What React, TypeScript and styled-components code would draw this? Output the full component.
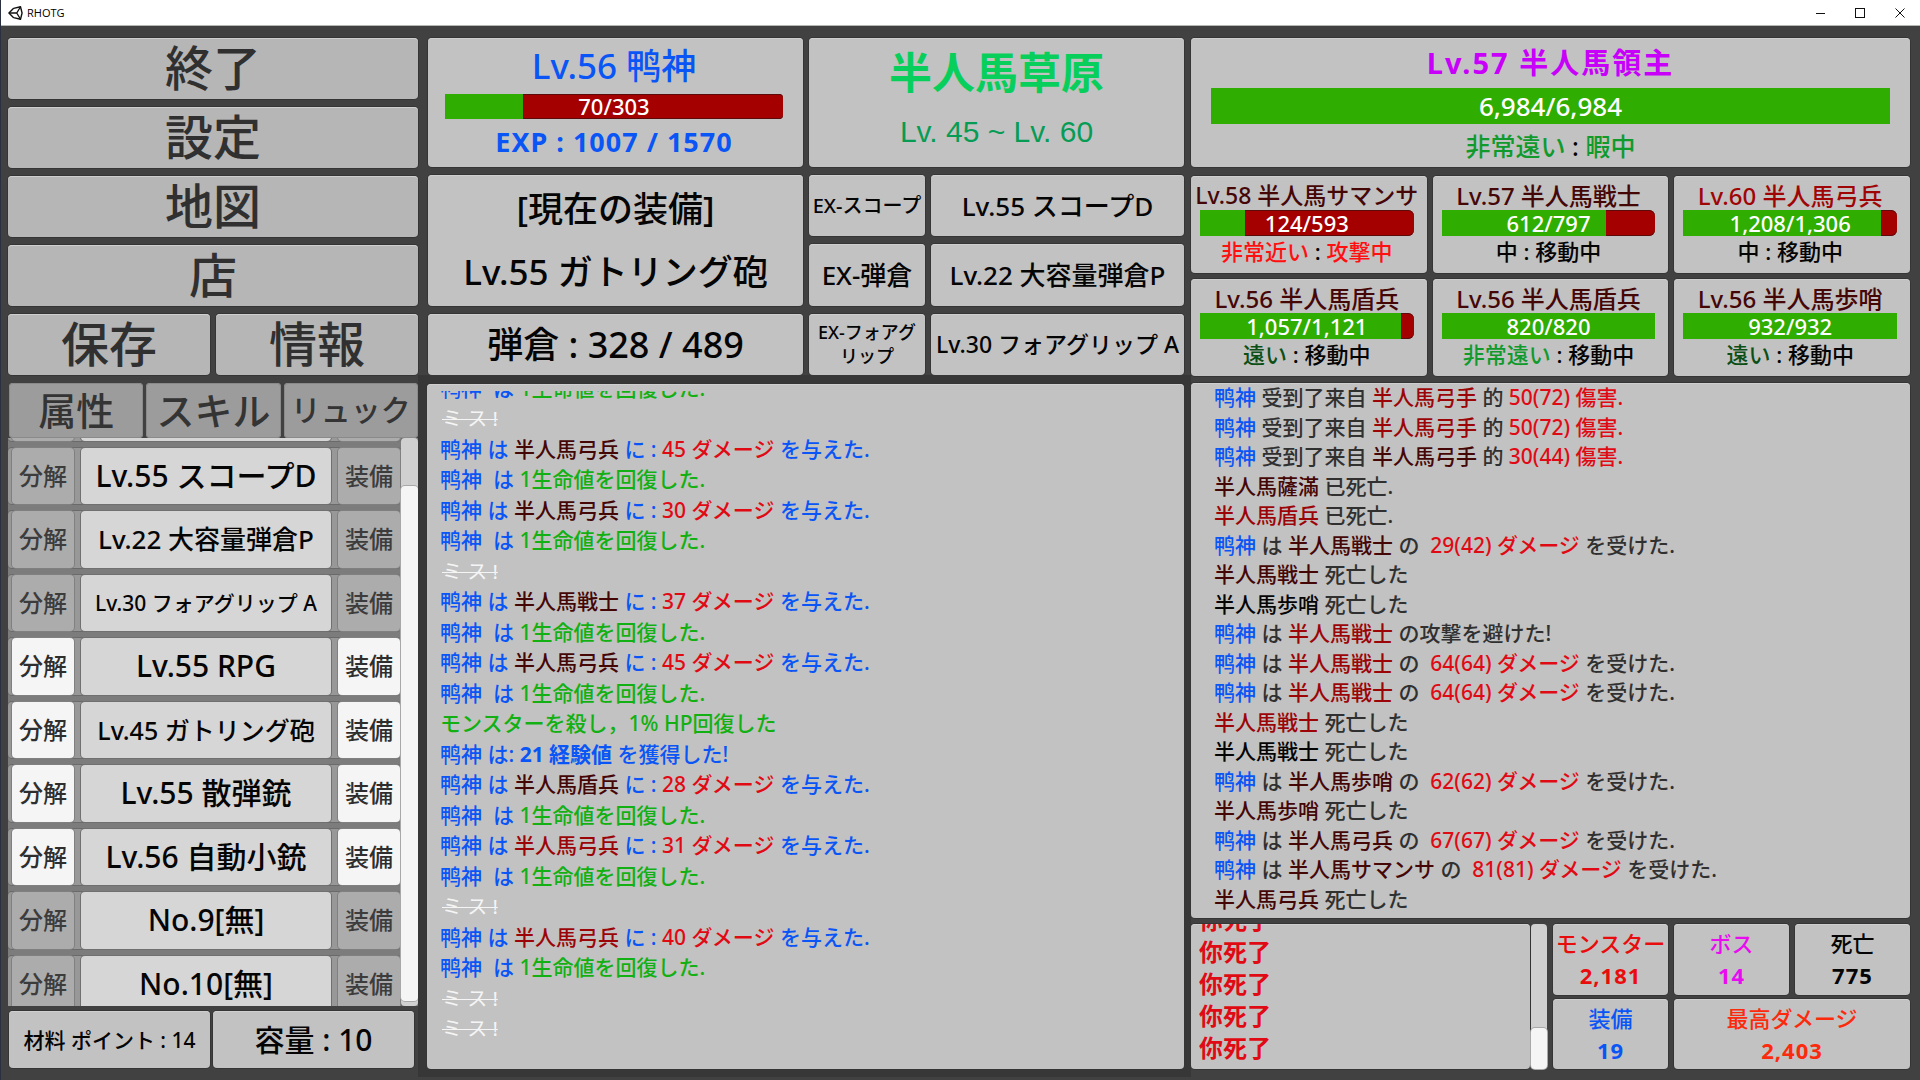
import React from "react";
import styled, { createGlobalStyle } from "styled-components";

const sans = `"Noto Sans", "Noto Sans CJK JP", "Noto Sans CJK SC", sans-serif`;

const color = {
  blue: "#0a55f5",
  green: "#12b012",
  red: "#e00a14",
  maroon: "#450606",
  darkRed: "#9c0508",
  black: "#050505",
  grey: "#303030",
  white: "#f5f5f5",
};
type Tone = keyof typeof color;

const GlobalStyle = createGlobalStyle`
  *, *::before, *::after { box-sizing: border-box; }
  html, body { margin: 0; background: #414141; }
  body, button { font-family: ${sans}; font-weight: 500; }
  ul, dl, dd, p, h1, h2 { margin: 0; padding: 0; list-style: none; font-weight: inherit; }
`;

const Window = styled.div`
  height: 100vh;
  min-height: 1040px;
  min-width: 1500px;
  display: flex;
  flex-direction: column;
  background: #414141;
  border-left: 1px solid #2b3040;
  color: ${color.black};
  overflow: hidden;
`;

const TitleBar = styled.header`
  flex: none;
  height: 26px;
  display: flex;
  align-items: center;
  padding-left: 7px;
  background: #fff;
  border-bottom: 1px solid #b4b8b4;
  font-family: "Open Sans", sans-serif;
`;

const AppName = styled.h1`
  flex: 1;
  padding-left: 4px;
  font-size: 11px;
  line-height: 24px;
  font-weight: 400;
  color: #000;
`;

const WindowButton = styled.button`
  width: 40px;
  height: 24px;
  padding: 0;
  border: 0;
  background: none;
  display: grid;
  place-items: center;
`;

const Columns = styled.main`
  flex: 1;
  min-height: 0;
  display: grid;
  grid-template-columns: 410fr 773fr 719fr;
  padding: 12px 10px 0 7px;
`;

const Column = styled.section`
  min-width: 0;
  min-height: 0;
  display: flex;
  flex-direction: column;
`;

const panelEdge = `
  border-radius: 4px;
  box-shadow: 0 0 0 1px #353535, inset 0 1px 0 #cfcfcf;
`;

const Panel = styled.div`
  ${panelEdge}
  background: #c2c2c2;
  min-width: 0;
`;

/* left column */

const Menu = styled.nav`
  flex: none;
  display: grid;
  grid-template-columns: 1fr 1fr;
  grid-auto-rows: 61px;
  gap: 8px 6px;
`;

const MenuButton = styled.button<{ $wide?: boolean }>`
  ${panelEdge}
  grid-column: ${(p) => (p.$wide ? "1 / -1" : "auto")};
  padding: 0 0 2px;
  border: 0;
  background: #b6b6b6;
  color: ${color.grey};
  font-size: 48px;
  line-height: 58px;
`;

const Tabs = styled.div`
  flex: none;
  display: grid;
  grid-template-columns: repeat(3, 1fr);
  gap: 3px;
  height: 63px;
  padding: 8px 0 0 1px;
`;

const Tab = styled.button<{ $small?: boolean }>`
  padding: 0 0 2px;
  border: 0;
  border-radius: 4px;
  box-shadow: inset 0 0 0 1px #8a8a8a;
  background: #9c9c9c;
  color: #343434;
  font-size: ${(p) => (p.$small ? 30 : 38)}px;
  line-height: 52px;
  white-space: nowrap;
`;

const Inventory = styled.div`
  flex: 1;
  min-height: 0;
  display: flex;
  background: #7c7c7c;
  overflow: hidden;
`;

const ItemList = styled.ul`
  flex: 1;
  margin: -54px 0 -6px;
  display: grid;
  grid-auto-rows: 1fr;
  gap: 7px;
`;

const ItemRow = styled.li`
  display: grid;
  grid-template-columns: 62px 1fr 62px;
  gap: 7px;
  padding: 0 1px 0 4px;
  background: #989898;
  box-shadow: 0 0 0 1px #6a6a6a;
  border-radius: 4px;
`;

const ItemAction = styled.button`
  padding: 0;
  border: 0;
  border-radius: 4px;
  box-shadow: 0 0 0 1px #808080;
  background: #f5f5f5;
  color: #2e2e2e;
  font-size: 24px;
  line-height: 54px;
  &:disabled {
    background: #acacac;
    color: #3c3c3c;
  }
`;

const ItemName = styled.div<{ $size: number }>`
  border-radius: 4px;
  box-shadow: 0 0 0 1px #707070;
  background: #d6d6d6;
  display: flex;
  align-items: center;
  justify-content: center;
  font-size: ${(p) => p.$size}px;
  line-height: 40px;
  white-space: nowrap;
`;

const ScrollTrack = styled.div<{ $top: number; $bottom: number; $width: number }>`
  flex: none;
  width: ${(p) => p.$width}px;
  padding: ${(p) => p.$top}px 0 ${(p) => p.$bottom}px;
  background: #d0d0d0;
  border-radius: 4px;
  display: flex;
`;

const ScrollThumb = styled.div`
  flex: 1;
  background: #f5f5f5;
  border-radius: 4px;
  box-shadow: 0 0 0 1px #a8a8a8;
`;

const Totals = styled.div`
  flex: none;
  display: grid;
  grid-template-columns: 1fr 1fr;
  gap: 3px;
  height: 74px;
  padding: 5px 4px 12px 1px;
`;

const Total = styled(Panel)<{ $size: number }>`
  display: grid;
  place-items: center;
  font-size: ${(p) => p.$size}px;
  line-height: 40px;
  white-space: nowrap;
`;

/* middle column */

const Overview = styled.div`
  flex: none;
  display: grid;
  grid-template-columns: 375fr 375fr;
  grid-template-rows: 129px 200px;
  gap: 8px 6px;
  padding: 0 7px 0 10px;
`;

const Centered = styled(Panel)`
  display: flex;
  flex-direction: column;
  align-items: center;
`;

const Player = styled(Centered)`
  padding: 8px 20px 0 17px;
  color: ${color.blue};
`;

const PlayerName = styled.h2`
  font-size: 35px;
  line-height: 40px;
  margin-bottom: 8px;
`;

const Experience = styled.p`
  font-size: 27px;
  line-height: 40px;
  font-weight: 700;
  letter-spacing: 1px;
  margin-top: 3px;
`;

const Track = styled.div<{ $height: number; $size: number; $radius: number }>`
  align-self: stretch;
  display: grid;
  height: ${(p) => p.$height}px;
  border-radius: 0 ${(p) => p.$radius}px ${(p) => p.$radius}px 0;
  background: #a50000;
  box-shadow: inset 0 1px 0 #5c0a0a, inset 0 -1px 0 #5c0a0a;
  color: #fff;
  font-size: ${(p) => p.$size}px;
  line-height: ${(p) => p.$height}px;
  text-align: center;
`;

const Fill = styled.div`
  grid-area: 1 / 1;
  background: #2fad00;
`;

const TrackText = styled.span`
  grid-area: 1 / 1;
`;

const ZoneName = styled.h2`
  margin-top: 5px;
  font-size: 43px;
  line-height: 60px;
  color: #08cf5b;
  font-weight: 600;
`;

const ZoneLevels = styled.p`
  font-family: "Liberation Sans", Arial, sans-serif;
  font-weight: 400;
  font-size: 30px;
  line-height: 58px;
  color: #079c55;
`;

const Stack = styled.div`
  display: grid;
  grid-template-rows: 131px 61px;
  gap: 8px;
`;

const Weapon = styled(Centered)`
  padding-top: 2px;
  font-size: 35px;
  line-height: 63px;
  white-space: nowrap;
`;

const Ammo = styled(Centered)`
  font-size: 36px;
  line-height: 61px;
  white-space: pre;
`;

const Attachments = styled.dl`
  display: grid;
  grid-template-columns: 116fr 253fr;
  grid-template-rows: repeat(3, 1fr);
  gap: 8px 6px;
`;

const Slot = styled(Panel)<{ $size: number }>`
  display: grid;
  place-items: center;
  text-align: center;
  font-size: ${(p) => p.$size}px;
  line-height: 24px;
  white-space: pre;
`;

const LogFrame = styled.div`
  flex: 1;
  min-height: 0;
  display: flex;
  margin-bottom: 3px;
  padding: 9px 7px 8px 9px;
  background: #373737;
`;

const Log = styled(Panel)`
  flex: 1;
  min-height: 0;
  display: flex;
  padding: 7px 12px 25px 13px;
  font-size: 21px;
`;

const LogClip = styled.div`
  flex: 1;
  display: flex;
  overflow: hidden;
`;

const LogLines = styled.ul<{ $cut?: number }>`
  flex: 1;
  margin-top: -${(p) => p.$cut ?? 0}px;
  display: grid;
  grid-auto-rows: 1fr;
`;

const LogLine = styled.li`
  display: flex;
  align-items: center;
  line-height: 29px;
  white-space: pre;
`;

const Part = styled.span<{ $tone: Tone; $bold?: boolean }>`
  color: ${(p) => color[p.$tone]};
  font-weight: ${(p) => (p.$bold ? 700 : 500)};
`;

const Miss = styled.s`
  padding-left: 2px;
  color: ${color.white};
  font-weight: 400;
  font-size: 20px;
  text-decoration-thickness: 1px;
`;

/* right column */

const Boss = styled(Centered)`
  flex: none;
  height: 129px;
  padding: 1px 20px 0;
`;

const BossName = styled.h2`
  font-size: 29px;
  line-height: 47px;
  margin-bottom: 2px;
  font-weight: 700;
  letter-spacing: 2px;
  color: #c800fa;
`;

const BossState = styled.p`
  margin-top: 2px;
  font-size: 25px;
  line-height: 40px;
  white-space: pre;
`;

const Enemies = styled.div`
  flex: none;
  display: grid;
  grid-template-columns: repeat(3, 1fr);
  grid-auto-rows: 97px;
  gap: 6px;
  padding: 9px 0 7px;
`;

const Enemy = styled(Centered)`
  padding: 5px 13px 0 9px;
`;

const EnemyName = styled.h2<{ $strong?: boolean; $long: boolean }>`
  font-size: ${(p) => (p.$long ? 23 : 24)}px;
  line-height: 29px;
  white-space: nowrap;
  color: ${(p) => (p.$strong ? "#a00505" : "#450606")};
`;

const EnemyState = styled.p`
  font-size: 22px;
  line-height: 30px;
  white-space: pre;
`;

const Tint = styled.span<{ $color: string }>`
  color: ${(p) => p.$color};
`;

const DamageLog = styled(Panel)`
  flex: 1;
  min-height: 0;
  display: flex;
  padding: 0 12px 4px 23px;
  font-size: 21px;
`;

const Footer = styled.div`
  flex: none;
  height: 162px;
  padding: 6px 0 11px;
  display: grid;
  grid-template-columns: 356fr 357fr;
  gap: 6px;
`;

const Deaths = styled.div`
  display: flex;
  gap: 1px;
  min-height: 0;
`;

const DeathList = styled(Panel)`
  flex: 1;
  display: flex;
  flex-direction: column;
  justify-content: flex-end;
  overflow: hidden;
  padding: 0 8px 5px;
  font-size: 24px;
  font-weight: 700;
  line-height: 32px;
  color: ${color.red};
`;

const Stats = styled.dl`
  display: grid;
  grid-template-columns: repeat(3, 1fr);
  grid-template-rows: 1fr 1fr;
  gap: 4px 6px;
`;

const Stat = styled(Centered)<{ $color: string; $wide?: boolean }>`
  grid-column: ${(p) => (p.$wide ? "span 2" : "auto")};
  justify-content: center;
  color: ${(p) => p.$color};
  font-size: 22px;
  line-height: 32px;
  white-space: nowrap;
  dd { font-weight: 700; letter-spacing: 1px; }
`;

const fmt = (n: number) => n.toLocaleString("en-US");

function HealthBar(p: { now: number; max: number; height: number; size: number; radius: number }) {
  return (
    <Track $height={p.height} $size={p.size} $radius={p.radius} role="progressbar" aria-label="HP" aria-valuenow={p.now} aria-valuemax={p.max}>
      <Fill style={{ width: `${(p.now / p.max) * 100}%` }} />
      <TrackText>{fmt(p.now)}/{fmt(p.max)}</TrackText>
    </Track>
  );
}

const items: { name: string; size: number; usable?: boolean }[] = [
  { name: "", size: 25 },
  { name: "Lv.55 スコープD", size: 30 },
  { name: "Lv.22 大容量弾倉P", size: 26 },
  { name: "Lv.30 フォアグリップ A", size: 21 },
  { name: "Lv.55 RPG", size: 30, usable: true },
  { name: "Lv.45 ガトリング砲", size: 25, usable: true },
  { name: "Lv.55 散弾銃", size: 30, usable: true },
  { name: "Lv.56 自動小銃", size: 30, usable: true },
  { name: "No.9[無]", size: 30 },
  { name: "No.10[無]", size: 30 },
];

type Seg = [string, Tone, boolean?];
const hit = (who: string, dmg: number, tone: Tone = "maroon"): Seg[] => [
  ["鸭神 は ", "blue"], [who, tone], [" に : ", "blue"], [`${dmg} ダメージ`, "red"], [" を与えた.", "blue"],
];
const heal: Seg[] = [["鸭神  は ", "blue"], ["1生命値を回復した.", "green"]];

const attackLog: (Seg[] | "miss")[] = [
  heal,
  "miss",
  hit("半人馬弓兵", 45),
  heal,
  hit("半人馬弓兵", 30),
  heal,
  "miss",
  hit("半人馬戦士", 37),
  heal,
  hit("半人馬弓兵", 45),
  heal,
  [["モンスターを殺し，1% HP回復した", "green"]],
  [["鸭神 は: ", "blue"], ["21 経験値", "blue", true], [" を獲得した!", "blue"]],
  hit("半人馬盾兵", 28),
  heal,
  hit("半人馬弓兵", 31, "darkRed"),
  heal,
  "miss",
  hit("半人馬弓兵", 40, "darkRed"),
  heal,
  "miss",
  "miss",
];

const tookCn = (dmg: string, tone: Tone): Seg[] => [
  ["鸭神", "blue"], [" 受到了来自 ", "grey"], ["半人馬弓手", tone], [" 的 ", "grey"], [`${dmg} 傷害.`, "red"],
];
const took = (who: string, dmg: string, tone: Tone): Seg[] => [
  ["鸭神", "blue"], [" は ", "grey"], [who, tone], [" の  ", "grey"], [`${dmg} ダメージ`, "red"], [" を受けた.", "grey"],
];
const died = (who: string, tone: Tone, text = " 死亡した"): Seg[] => [[who, tone], [text, "grey"]];

const damageLog: Seg[][] = [
  tookCn("50(72)", "darkRed"),
  tookCn("50(72)", "darkRed"),
  tookCn("30(44)", "maroon"),
  died("半人馬薩滿", "maroon", " 已死亡."),
  died("半人馬盾兵", "darkRed", " 已死亡."),
  took("半人馬戦士", "29(42)", "maroon"),
  died("半人馬戦士", "maroon"),
  died("半人馬歩哨", "black"),
  [["鸭神", "blue"], [" は ", "grey"], ["半人馬戦士", "darkRed"], [" の攻撃を避けた!", "grey"]],
  took("半人馬戦士", "64(64)", "darkRed"),
  took("半人馬戦士", "64(64)", "darkRed"),
  died("半人馬戦士", "darkRed"),
  died("半人馬戦士", "black"),
  took("半人馬歩哨", "62(62)", "maroon"),
  died("半人馬歩哨", "maroon"),
  took("半人馬弓兵", "67(67)", "maroon"),
  took("半人馬サマンサ", "81(81)", "maroon"),
  died("半人馬弓兵", "maroon"),
];

const enemies = [
  { name: "Lv.58 半人馬サマンサ", now: 124, max: 593, range: "非常近い", rc: "#ff1010", act: "攻撃中", ac: "#ff1010" },
  { name: "Lv.57 半人馬戦士", now: 612, max: 797, range: "中", rc: "#050505", act: "移動中", ac: "#050505" },
  { name: "Lv.60 半人馬弓兵", now: 1208, max: 1306, range: "中", rc: "#050505", act: "移動中", ac: "#050505", strong: true },
  { name: "Lv.56 半人馬盾兵", now: 1057, max: 1121, range: "遠い", rc: "#0c4f16", act: "移動中", ac: "#050505" },
  { name: "Lv.56 半人馬盾兵", now: 820, max: 820, range: "非常遠い", rc: "#109a2c", act: "移動中", ac: "#050505" },
  { name: "Lv.56 半人馬歩哨", now: 932, max: 932, range: "遠い", rc: "#0c4f16", act: "移動中", ac: "#050505" },
];

const stats = [
  { label: "モンスター", value: "2,181", color: "#e80c0c" },
  { label: "ボス", value: "14", color: "#ea0cf0" },
  { label: "死亡", value: "775", color: "#050505" },
  { label: "装備", value: "19", color: "#0a55f5" },
  { label: "最高ダメージ", value: "2,403", color: "#fb2a0c", wide: true },
];

const Line = ({ segs }: { segs: Seg[] }) => (
  <LogLine>
    {segs.map(([text, tone, bold], i) => (
      <Part key={i} $tone={tone} $bold={bold}>{text}</Part>
    ))}
  </LogLine>
);

export default function App() {
  return (
    <Window lang="ja">
      <GlobalStyle />
      <TitleBar>
        <svg width="15" height="16" viewBox="0 0 24 24" fill="none" stroke="#111" strokeWidth="2.2" strokeLinejoin="round" aria-hidden="true">
          <path d="M9 4.500 20 2l2.500 10L20 22 9 19.500M9 4.500 1.500 12 9 19.500" />
          <path d="M20 2 14 12 20 22M14 12H1.500" />
        </svg>
        <AppName>RHOTG</AppName>
        <WindowButton aria-label="Minimize">
          <svg width="10" height="10" stroke="#111"><path d="M1 5.500h9" /></svg>
        </WindowButton>
        <WindowButton aria-label="Maximize">
          <svg width="10" height="10" fill="none" stroke="#111"><rect x="0.500" y="0.500" width="9" height="9" /></svg>
        </WindowButton>
        <WindowButton aria-label="Close">
          <svg width="10" height="10" stroke="#111"><path d="M0.500 0.500l9 9M9.500 0.500l-9 9" /></svg>
        </WindowButton>
      </TitleBar>

      <Columns>
        <Column>
          <Menu>
            {["終了", "設定", "地図", "店"].map((t) => <MenuButton key={t} $wide>{t}</MenuButton>)}
            <MenuButton>保存</MenuButton>
            <MenuButton>情報</MenuButton>
          </Menu>
          <Tabs>
            <Tab>属性</Tab>
            <Tab>スキル</Tab>
            <Tab $small>リュック</Tab>
          </Tabs>
          <Inventory>
            <ItemList>
              {items.map((it, i) => (
                <ItemRow key={i} aria-hidden={!it.name}>
                  <ItemAction disabled={!it.usable}>{it.name && "分解"}</ItemAction>
                  <ItemName $size={it.size}>{it.name}</ItemName>
                  <ItemAction disabled={!it.usable}>{it.name && "装備"}</ItemAction>
                </ItemRow>
              ))}
            </ItemList>
            <ScrollTrack $width={17} $top={48} $bottom={5}><ScrollThumb /></ScrollTrack>
          </Inventory>
          <Totals>
            <Total $size={21}>材料 ポイント : 14</Total>
            <Total $size={30}>容量 : 10</Total>
          </Totals>
        </Column>

        <Column>
          <Overview>
            <Player>
              <PlayerName>Lv.56 鸭神</PlayerName>
              <HealthBar now={70} max={303} height={25} size={22} radius={4} />
              <Experience>EXP : 1007 / 1570</Experience>
            </Player>
            <Centered>
              <ZoneName>半人馬草原</ZoneName>
              <ZoneLevels>Lv. 45 ~ Lv. 60</ZoneLevels>
            </Centered>
            <Stack>
              <Weapon>
                <p>[現在の装備]</p>
                <p>Lv.55 ガトリング砲</p>
              </Weapon>
              <Ammo>弾倉 : 328 / 489</Ammo>
            </Stack>
            <Attachments>
              <Slot as="dt" $size={20}>EX-スコープ</Slot>
              <Slot as="dd" $size={26}>Lv.55 スコープD</Slot>
              <Slot as="dt" $size={26}>EX-弾倉</Slot>
              <Slot as="dd" $size={26}>Lv.22 大容量弾倉P</Slot>
              <Slot as="dt" $size={18}>{"EX-フォアグ\nリップ"}</Slot>
              <Slot as="dd" $size={23}>Lv.30 フォアグリップ A</Slot>
            </Attachments>
          </Overview>
          <LogFrame>
            <Log>
              <LogClip>
                <LogLines $cut={18}>
                  {attackLog.map((l, i) =>
                    l === "miss" ? <LogLine key={i}><Miss>ミ ス !</Miss></LogLine> : <Line key={i} segs={l} />
                  )}
                </LogLines>
              </LogClip>
            </Log>
          </LogFrame>
        </Column>

        <Column>
          <Boss>
            <BossName>Lv.57 半人馬領主</BossName>
            <HealthBar now={6984} max={6984} height={36} size={26} radius={0} />
            <BossState>
              <Tint $color="#109a2c">非常遠い</Tint> : <Tint $color="#109a2c">暇中</Tint>
            </BossState>
          </Boss>
          <Enemies>
            {enemies.map((e, i) => (
              <Enemy key={i}>
                <EnemyName $strong={e.strong} $long={e.name.length > 11}>{e.name}</EnemyName>
                <HealthBar now={e.now} max={e.max} height={26} size={22} radius={e.now < e.max ? 6 : 0} />
                <EnemyState>
                  <Tint $color={e.rc}>{e.range}</Tint> : <Tint $color={e.ac}>{e.act}</Tint>
                </EnemyState>
              </Enemy>
            ))}
          </Enemies>
          <DamageLog>
            <LogLines>
              {damageLog.map((l, i) => <Line key={i} segs={l} />)}
            </LogLines>
          </DamageLog>
          <Footer>
            <Deaths>
              <DeathList>
                {[0, 1, 2, 3, 4].map((i) => <p key={i}>你死了</p>)}
              </DeathList>
              <ScrollTrack $width={16} $top={104} $bottom={0}><ScrollThumb /></ScrollTrack>
            </Deaths>
            <Stats>
              {stats.map((s) => (
                <Stat key={s.label} $color={s.color} $wide={s.wide}>
                  <dt>{s.label}</dt>
                  <dd>{s.value}</dd>
                </Stat>
              ))}
            </Stats>
          </Footer>
        </Column>
      </Columns>
    </Window>
  );
}
